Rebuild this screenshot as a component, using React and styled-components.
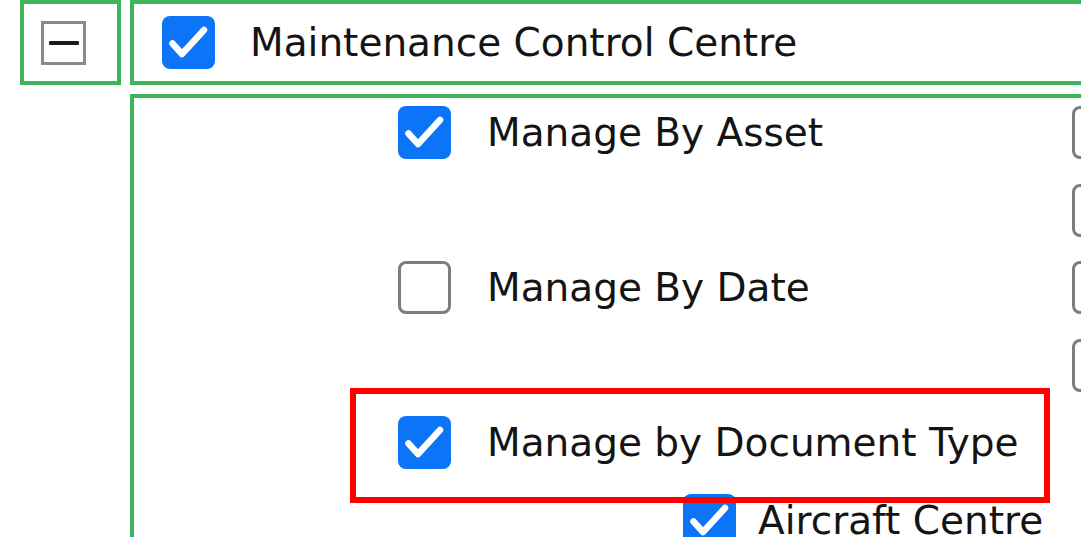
import React from "react";
import styled, { createGlobalStyle } from "styled-components";

const Global = createGlobalStyle`
  html, body {
    margin: 0;
    padding: 0;
    background: #ffffff;
    overflow: hidden;
  }
  body {
    font-family: "DejaVu Sans", "Noto Sans", sans-serif;
    color: #141414;
  }
`;

const GREEN = "#3db45a";

const Page = styled.div`
  width: 1300px;
  padding-left: 20px;
  display: flex;
  flex-direction: column;
  gap: 9px;
`;

const HeaderRow = styled.div`
  display: flex;
  gap: 9px;
  height: 85px;
`;

const ToggleCell = styled.div`
  box-sizing: border-box;
  width: 101px;
  height: 100%;
  border: 4px solid ${GREEN};
  display: flex;
  align-items: center;
  padding-left: 17px;
`;

const CollapseBox = styled.button`
  box-sizing: border-box;
  width: 45px;
  height: 44px;
  border: 3px solid #8a8a8a;
  background: #fff;
  padding: 0;
  display: flex;
  align-items: center;
  justify-content: center;
  cursor: pointer;
`;

const MinusBar = styled.span`
  display: block;
  width: 30px;
  height: 4px;
  background: #1c1c1c;
  border-radius: 1px;
`;

const TitleCell = styled.div`
  box-sizing: border-box;
  flex: 1;
  height: 100%;
  border: 4px solid ${GREEN};
  display: flex;
  align-items: center;
  padding-left: 28px;
  gap: 35px;
`;

const Panel = styled.div`
  box-sizing: border-box;
  margin-left: 110px;
  width: 1100px;
  height: 600px;
  border: 4px solid ${GREEN};
  border-right: none;
  border-bottom: none;
`;

const Row = styled.div`
  position: relative;
  display: grid;
  grid-template-columns: 938px 53px;
  height: 77.5px;
  padding-top: 8px;
  box-sizing: border-box;
`;

const Main = styled.div`
  display: flex;
  align-items: center;
  height: 53px;
  padding-left: ${(p) => p.$indent}px;
  gap: ${(p) => p.$gap}px;
`;

const Label = styled.span`
  font-size: 39px;
  line-height: 1;
  white-space: nowrap;
  color: #141414;
`;

const Box = styled.span`
  box-sizing: border-box;
  flex: none;
  width: 53px;
  height: 53px;
  border-radius: 8px;
  display: inline-flex;
  align-items: center;
  justify-content: center;
  background: ${(p) => (p.$checked ? "#0b74f7" : "#ffffff")};
  border: ${(p) => (p.$checked ? "none" : "3px solid #7d7d7d")};
  position: relative;
  z-index: 0;
`;

const Highlight = styled.div`
  position: absolute;
  left: 216px;
  top: -20px;
  width: 700px;
  height: 115px;
  box-sizing: border-box;
  border: 6px solid #ff0000;
  pointer-events: none;
  z-index: 2;
`;

function Check({ checked }) {
  return (
    <Box $checked={checked}>
      {checked && (
        <svg width="53" height="53" viewBox="0 0 53 53">
          <path
            d="M10.5 27.5 L20 38 L42 14"
            fill="none"
            stroke="#ffffff"
            strokeWidth="6.5"
            strokeLinecap="round"
            strokeLinejoin="round"
          />
        </svg>
      )}
    </Box>
  );
}

const rows = [
  { label: "Manage By Asset", checked: true, level: 1, side: true },
  { label: null, side: true },
  { label: "Manage By Date", checked: false, level: 1, side: true },
  { label: null, side: true },
  { label: "Manage by Document Type", checked: true, level: 1, side: false, highlight: true },
  { label: "Aircraft Centre", checked: true, level: 2, side: false },
];

export default function App() {
  return (
    <>
      <Global />
      <Page>
        <HeaderRow>
          <ToggleCell>
            <CollapseBox aria-label="collapse">
              <MinusBar />
            </CollapseBox>
          </ToggleCell>
          <TitleCell>
            <Check checked />
            <Label>Maintenance Control Centre</Label>
          </TitleCell>
        </HeaderRow>
        <Panel>
          {rows.map((r, i) => (
            <Row key={i}>
              <Main
                $indent={r.level === 2 ? 549 : 264}
                $gap={r.level === 2 ? 22 : 36}
              >
                {r.label && <Check checked={r.checked} />}
                {r.label && <Label>{r.label}</Label>}
              </Main>
              {r.side ? <Check checked={false} /> : <span />}
              {r.highlight && <Highlight />}
            </Row>
          ))}
        </Panel>
      </Page>
    </>
  );
}
